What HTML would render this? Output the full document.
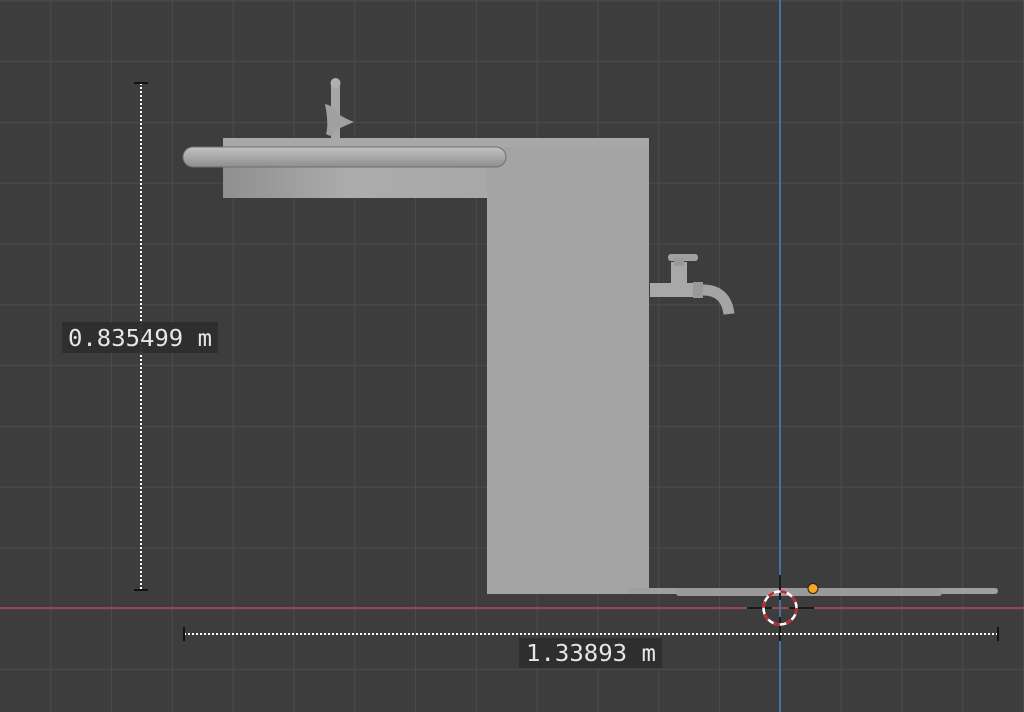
<!DOCTYPE html><html><head><style>html,body{margin:0;padding:0;background:#3d3d3d;overflow:hidden}</style></head><body>
<svg width="1024" height="712" xmlns="http://www.w3.org/2000/svg" style="display:block">
<defs>
<pattern id="g" x="-10.6" y="0.3" width="60.8" height="60.8" patternUnits="userSpaceOnUse">
<path d="M0 0H60.8M0 0V60.8" stroke="#4c4c4c" stroke-width="2" fill="none"/></pattern>
<linearGradient id="bs" x1="0" x2="1"><stop offset="0" stop-color="#8f8f8f"/><stop offset=".3" stop-color="#acacac"/><stop offset="1" stop-color="#a3a3a3"/></linearGradient>
<linearGradient id="rail" x1="0" y1="0" x2="0" y2="1"><stop offset="0" stop-color="#c2c2c2"/><stop offset="1" stop-color="#8e8e8e"/></linearGradient>
</defs>
<rect width="1024" height="712" fill="#3d3d3d"/>
<rect width="1024" height="712" fill="url(#g)"/>
<line x1="0" y1="608" x2="1024" y2="608" stroke="#9a4550" stroke-width="2"/>
<line x1="780" y1="0" x2="780" y2="712" stroke="#4a6fa8" stroke-width="2"/>
<rect x="223" y="138" width="426" height="60" fill="url(#bs)"/>
<rect x="487" y="138" width="162" height="456" fill="#a4a4a4"/>
<rect x="223" y="138" width="426" height="9" fill="#a8a8a8"/>
<rect x="183" y="147" width="323" height="20" rx="10" fill="url(#rail)" stroke="#6e6e6e" stroke-width="1"/>
<rect x="331" y="84" width="9" height="54" fill="#a6a6a6"/>
<circle cx="335.5" cy="83" r="5" fill="#b0b0b0"/>
<path d="M325 104 Q334 106 338 114 Q346 119 354 122 Q344 126 336 130 L330 136 L326 134 Q329 124 325 104 Z" fill="#a0a0a0"/>
<rect x="650" y="283" width="50" height="14" fill="#a8a8a8"/>
<rect x="671" y="262" width="16" height="26" fill="#a8a8a8"/>
<rect x="668" y="254" width="30" height="7" rx="3" fill="#a0a0a0"/>
<rect x="674" y="258" width="10" height="8" fill="#999"/>
<rect x="693" y="282" width="10" height="16" fill="#999"/>
<path d="M703 290 Q726 290 729 314" stroke="#a4a4a4" stroke-width="11" fill="none"/>
<rect x="628" y="588" width="370" height="6" rx="3" fill="#9f9f9f"/>
<rect x="676" y="588" width="266" height="8" rx="3" fill="#9a9a9a"/>
<circle cx="813" cy="588.5" r="5" fill="#f5a623" stroke="#222" stroke-width="1"/>
<line x1="747" y1="608" x2="814" y2="608" stroke="#1a1a1a" stroke-width="2" stroke-dasharray="25 17 25"/>
<line x1="780" y1="575" x2="780" y2="641" stroke="#1a1a1a" stroke-width="2" stroke-dasharray="25 17 25"/>
<circle cx="780" cy="608" r="16.5" fill="none" stroke="#fff" stroke-width="2.5"/>
<circle cx="780" cy="608" r="16.5" fill="none" stroke="#c8242a" stroke-width="2.5" stroke-dasharray="6.5 6.5"/>
<line x1="141" y1="83" x2="141" y2="590" stroke="#fff" stroke-width="2" stroke-dasharray="2 2"/>
<line x1="134" y1="83" x2="148" y2="83" stroke="#111" stroke-width="2"/>
<line x1="134" y1="590" x2="148" y2="590" stroke="#111" stroke-width="2"/>
<line x1="184" y1="634" x2="998" y2="634" stroke="#fff" stroke-width="2" stroke-dasharray="2 2"/>
<line x1="184" y1="627" x2="184" y2="641" stroke="#111" stroke-width="2"/>
<line x1="998" y1="627" x2="998" y2="641" stroke="#111" stroke-width="2"/>
<rect x="62" y="322" width="156" height="31" fill="#2c2c2c" opacity=".92"/>
<text x="68" y="346" font-family="DejaVu Sans Mono, monospace" font-size="23.5" fill="#e6e6e6" textLength="144" lengthAdjust="spacingAndGlyphs">0.835499 m</text>
<rect x="519" y="638" width="143" height="30" fill="#2c2c2c" opacity=".92"/>
<text x="526" y="661" font-family="DejaVu Sans Mono, monospace" font-size="23.5" fill="#e6e6e6" textLength="130" lengthAdjust="spacingAndGlyphs">1.33893 m</text>
</svg></body></html>
